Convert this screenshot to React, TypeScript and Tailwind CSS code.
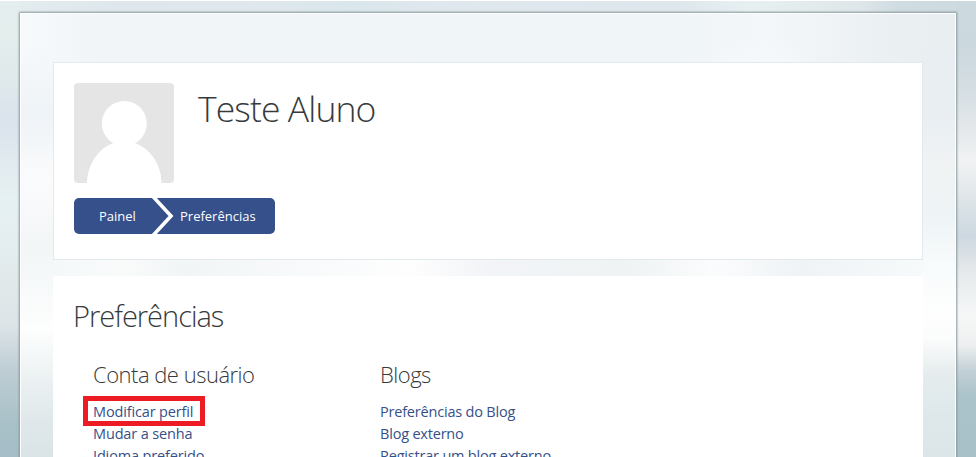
const accountLinks = ["Modificar perfil", "Mudar a senha", "Idioma preferido"];
const blogLinks = ["Preferências do Blog", "Blog externo", "Registrar um blog externo"];

function Avatar() {
  return (
    <svg width="100" height="100" viewBox="0 0 100 100" className="block shrink-0 rounded-[4px] bg-[#e5e5e5]">
      <circle cx="50.3" cy="40.5" r="22.5" fill="#fff" />
      <path d="M12.8 100C14 77 29 58.500 50 58.500s37 18.500 37.500 41.500z" fill="#fff" />
    </svg>
  );
}

function Breadcrumb() {
  return (
    <nav className="mt-[15px] flex h-9 w-[201px] items-center overflow-hidden rounded-[5px] bg-[#35508a] text-[13px] text-white">
      <span className="w-[77px] pt-px pl-[25px]">Painel</span>
      <svg width="24" height="36" viewBox="0 0 24 36" className="shrink-0">
        <path d="M2 -1.500L20 18L2 37.500" fill="none" stroke="#fff" strokeWidth="3.600" />
      </svg>
      <span className="pt-px pl-[5px] whitespace-nowrap">Preferências</span>
    </nav>
  );
}

export default function App() {
  return (
    <div className="h-[457px] w-[976px] overflow-hidden border-t border-white bg-[linear-gradient(to_right,#e4edee,#dfe7ed_12%,#e0e8ed_26%,#d9e6eb_36%,#e0e8ee_45%,#dde7ec_69%,#e7f0f1_77%,#dfe6e9_88%,#cfdce1_92%,#ccd9df)] font-['Open_Sans','Noto_Sans',sans-serif]">
      <div className="flex h-full">
        <div className="h-full w-5 bg-[linear-gradient(to_bottom,#e5edee_0px,#e3eeed_35px,#e0e9eb_75px,#dae3ec_120px,#e2ebef_165px,#e6f1f3_200px,#e2eaec_270px,#dce4e7_325px,#bdcdd3_370px,#a8c0c8_425px,#a5bdc6_457px)]" />
        <div className="relative z-10 flex-1 pt-3">
          <div className="h-[460px] border border-white bg-[radial-gradient(ellipse_75px_70px_at_740px_88px,#f8fbfd,transparent),linear-gradient(to_right,#f7fafb,#f1f5f8_8%,#f0f5f8_70%,#f4f7f9_80%,#ebf0f3_92%,#e9eef1)] shadow-[0_0_2px_1px_#87979d]">
            <div className="h-full bg-[linear-gradient(to_bottom,transparent_30px,#f3f7f9_60px,#eef3f7_100px,#fafbfc_165px,#f3f6f7_230px,#f5f8f9_260px,#fdfefe_315px,#eaf0f1_370px,#dfe7ea_410px,#d9e4e7_445px),linear-gradient(to_bottom,transparent_30px,#e8eef2_60px,#e8eef2_100px,#f0f3f4_150px,#eef3f5_200px,#f7fbfc_250px,#fefefe_300px,#fbfcfc_325px,#e5ecee_360px,#dee8ea_400px,#dce6e9_445px)] bg-[size:32px_100%,33px_100%] bg-[position:left_top,right_top] bg-no-repeat px-8 pt-12">
              <section className="h-[198px] w-[870px] border border-[#e3eaee] bg-white px-5 pt-5">
                <div className="flex">
                  <Avatar />
                  <h1 className="ml-6 text-[35.500px] leading-[50px] font-light tracking-[-0.9px] text-[#373a3c]">Teste Aluno</h1>
                </div>
                <Breadcrumb />
              </section>
              <div className="h-4 bg-[linear-gradient(to_right,#f5f8f9,#f9fbfb_8%,#f2f5f6_15%,#f8fafb_30%,#fefefe_41%,#f2f4f7_50%,#eff3f3_66%,#fbfcfd_76%,#eff3f5_86%,#f7fafb)]" />
              <section className="h-[190px] w-[870px] rounded-t-[3px] bg-white px-5 pt-5">
                <h2 className="h-[60px] text-[29px] leading-[40px] font-light tracking-[-1px] text-[#373a3c]">Preferências</h2>
                <div className="flex pl-5">
                  <div className="w-[287px]">
                    <h3 className="h-[45px] pt-[3px] text-[22px] leading-[30px] font-light tracking-[-0.5px] text-[#373a3c]">Conta de usuário</h3>
                    <ul className="text-[14.5px] leading-[22px] tracking-[-0.150px] text-[#35508a]">
                      {accountLinks.map((t, i) => (
                        <li key={t}>
                          {i === 0 ? (
                            <a className="relative block w-fit">
                              {t}
                              <span className="absolute top-[-5px] left-[-10px] h-[30px] w-[122px] border-[5px] border-[#ed1c24]" />
                            </a>
                          ) : (
                            <a>{t}</a>
                          )}
                        </li>
                      ))}
                    </ul>
                  </div>
                  <div>
                    <h3 className="h-[45px] pt-[3px] text-[22px] leading-[30px] font-light tracking-[-0.5px] text-[#373a3c]">Blogs</h3>
                    <ul className="text-[14.5px] leading-[22px] tracking-[-0.2px] text-[#35508a]">
                      {blogLinks.map((t) => (
                        <li key={t}><a>{t}</a></li>
                      ))}
                    </ul>
                  </div>
                </div>
              </section>
            </div>
          </div>
        </div>
        <div className="h-full w-5 bg-[linear-gradient(to_bottom,#ccd9df_0px,#cbd8de_45px,#d5dee3_90px,#e3e7ea_125px,#f1f3f3_160px,#dde4e8_200px,#cdd8e0_235px,#e5e9eb_270px,#f6f8f8_315px,#eceeef_345px,#c2d0d6_370px,#abc3cb_395px,#a7c0c8_457px)]" />
      </div>
    </div>
  );
}
